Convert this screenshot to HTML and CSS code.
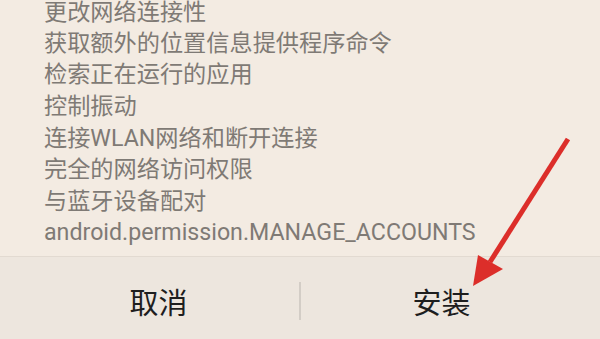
FILE: index.html
```html
<!DOCTYPE html>
<html lang="zh">
<head>
<meta charset="utf-8">
<link rel="stylesheet" href="styles.css">
</head>
<body>
<div class="screen">
  <ul class="perms">
    <li class="first">更改网络连接性</li>
    <li>获取额外的位置信息提供程序命令</li>
    <li>检索正在运行的应用</li>
    <li>控制振动</li>
    <li>连接WLAN网络和断开连接</li>
    <li>完全的网络访问权限</li>
    <li>与蓝牙设备配对</li>
    <li>android.permission.MANAGE_ACCOUNTS</li>
  </ul>
  <div class="actions">
    <div class="btn">取消</div>
    <div class="sep"></div>
    <div class="btn">安装</div>
  </div>
  <svg class="arrow" width="600" height="339" viewBox="0 0 600 339">
    <line x1="568" y1="139" x2="490" y2="262" stroke="#dc2e2a" stroke-width="5" stroke-linecap="butt"/>
    <polygon points="473,286 478,255 503,269" fill="#dc2e2a"/>
  </svg>
</div>
</body>
</html>
```
FILE: styles.css
```css
html, body {
  margin: 0;
  padding: 0;
}
body {
  width: 600px;
  height: 339px;
  overflow: hidden;
  font-family: Roboto, "Noto Sans CJK SC", sans-serif;
}
.screen {
  position: relative;
  width: 600px;
  height: 339px;
  background: #f3ebe2;
  display: flex;
  flex-direction: column;
}
.perms {
  list-style: none;
  margin: 0;
  padding: 0 0 0 44px;
  height: 256px;
  color: #7f7a75;
  font-size: 23.2px;
  line-height: 31.6px;
}
.perms li {
  white-space: nowrap;
}
.perms li.first {
  line-height: 24px;
  margin-bottom: 3.8px;
}
.actions {
  flex: 1;
  display: flex;
  align-items: center;
  padding: 0 18px;
  background: #ede6de;
  border-top: 1px solid #e2dad1;
}
.btn {
  flex: 1;
  text-align: center;
  font-size: 29px;
  color: #1e1e1e;
  padding-top: 6px;
}
.sep {
  width: 2px;
  height: 38px;
  margin-top: 6px;
  background: #d3cdc6;
}
.arrow {
  position: absolute;
  left: 0;
  top: 0;
}
```
